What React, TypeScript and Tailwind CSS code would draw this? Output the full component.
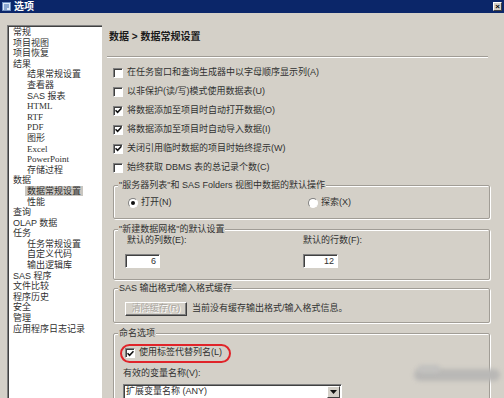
import React from 'react';

const tree: [string, number, boolean?][] = [
  ['常规', 0],
  ['项目视图', 0],
  ['项目恢复', 0],
  ['结果', 0],
  ['结果常规设置', 1],
  ['查看器', 1],
  ['SAS 报表', 1],
  ['HTML', 1],
  ['RTF', 1],
  ['PDF', 1],
  ['图形', 1],
  ['Excel', 1],
  ['PowerPoint', 1],
  ['存储过程', 1],
  ['数据', 0],
  ['数据常规设置', 1, true],
  ['性能', 1],
  ['查询', 0],
  ['OLAP 数据', 0],
  ['任务', 0],
  ['任务常规设置', 1],
  ['自定义代码', 1],
  ['输出逻辑库', 1],
  ['SAS 程序', 0],
  ['文件比较', 0],
  ['程序历史', 0],
  ['安全', 0],
  ['管理', 0],
  ['应用程序日志记录', 0],
];

const options: [string, boolean][] = [
  ['在任务窗口和查询生成器中以字母顺序显示列(A)', false],
  ['以非保护(读/写)模式使用数据表(U)', false],
  ['将数据添加至项目时自动打开数据(O)', true],
  ['将数据添加至项目时自动导入数据(I)', true],
  ['关闭引用临时数据的项目时始终提示(W)', true],
  ['始终获取 DBMS 表的总记录个数(C)', false],
];

function Checkbox({ checked }: { checked: boolean }) {
  return (
    <span className="flex h-[10px] w-[10px] shrink-0 items-center justify-center border border-t-[#808080] border-l-[#808080] border-r-white border-b-white bg-white shadow-[inset_1px_1px_0_#404040]">
      {checked && (
        <svg width="7" height="7" viewBox="0 0 7 7">
          <path d="M0.5 3.2 L2.6 5.3 L6.5 1.2" fill="none" stroke="#111" strokeWidth="1.6" />
        </svg>
      )}
    </span>
  );
}

function Radio({ checked }: { checked: boolean }) {
  return (
    <span className="flex h-[10px] w-[10px] shrink-0 items-center justify-center rounded-full border border-t-[#808080] border-l-[#808080] border-r-white border-b-white bg-white">
      {checked && <span className="h-[4px] w-[4px] rounded-full bg-[#111]" />}
    </span>
  );
}

function Group({ title, className, children }: { title: string; className?: string; children: React.ReactNode }) {
  return (
    <fieldset className={`ml-[6px] rounded-[2px] border border-[#a19d96] shadow-[inset_1px_1px_0_#fff,1px_1px_0_#fff] ${className ?? ''}`}>
      <legend className="ml-[4px] bg-[#d4d0c8] px-[1px] leading-[12px]">{title}</legend>
      {children}
    </fieldset>
  );
}

export default function App() {
  return (
    <div className="relative h-[398px] w-[504px] overflow-hidden bg-[#d4d0c8] font-['Liberation_Sans','Noto_Sans_CJK_SC',sans-serif] text-[9px] text-[#303030]">
      {/* Title bar */}
      <div className="flex h-[13px] items-center bg-[#0b2669] pl-[2px] pr-[2px]">
        <svg width="9" height="9" viewBox="0 0 9 9">
          <rect x="0.5" y="0.5" width="8" height="8" fill="#dce8f6" stroke="#6f8fc0" />
          <path d="M2 3h5M2 5h5M2 7h3" stroke="#3a66a8" strokeWidth="1" />
        </svg>
        <span className="ml-[3px] text-[10px] font-bold leading-[13px] text-white">选项</span>
        <span className="ml-auto flex h-[9px] w-[9px] items-center justify-center border border-t-white border-l-white border-r-[#404040] border-b-[#404040] bg-[#d4d0c8] text-[8px] font-bold leading-none text-black">
          ×
        </span>
      </div>

      <div className="flex h-[385px] pl-[7px] pt-[12px]">
        {/* Tree */}
        <div className="w-[95px] shrink-0 border-l border-t border-[#808080] bg-white pl-[5px] pt-[1px] shadow-[inset_1px_1px_0_#404040]">
          {tree.map(([label, level, selected]) => (
            <div key={label} className="h-[10.6px] whitespace-nowrap leading-[10.6px]">
              <span
                className={`${level ? 'ml-[12px] px-[2px]' : ''} ${selected ? 'bg-[#c9c6c0]' : ''} ${
                  ['HTML', 'RTF', 'PDF', 'Excel', 'PowerPoint'].includes(label) ? "font-['Liberation_Serif',serif]" : ''
                }`}
              >
                {label}
              </span>
            </div>
          ))}
        </div>

        {/* Settings page */}
        <div className="ml-[5px] flex w-[383px] flex-col">
          <div className="mt-[6px] pl-[2px] text-[10px] font-bold leading-[12px] text-[#1a1a1a]">数据 &gt; 数据常规设置</div>
          <div className="mt-[13px] h-[2px] w-[381px] border-t border-b border-t-[#a09c95] border-b-white" />

          <div className="mt-[5px] pl-[6px]">
            {options.map(([label, checked]) => (
              <div key={label} className="flex h-[19px] items-center gap-[4px]">
                <Checkbox checked={checked} />
                <span>{label}</span>
              </div>
            ))}
          </div>

          <Group title={'"服务器列表"和 SAS Folders 视图中数据的默认操作'} className="mt-[2px] pb-[8px]">
            <div className="mt-[5px] flex h-[14px] items-center pl-[14px]">
              <div className="flex w-[180px] items-center gap-[3px]">
                <Radio checked />
                <span>打开(N)</span>
              </div>
              <div className="flex items-center gap-[3px]">
                <Radio checked={false} />
                <span>探索(X)</span>
              </div>
            </div>
          </Group>

          <Group title={'"新建数据网格"的默认设置'} className="mt-[4px] pb-[11px]">
            <div className="flex pl-[11px]">
              <div className="w-[178px]">
                <div className="pl-[2px] leading-[10px]">默认的列数(E):</div>
                <div className="mt-[9px] h-[14px] w-[35px] border border-t-[#808080] border-l-[#808080] border-r-white border-b-white bg-white pr-[3px] text-right leading-[12px] shadow-[inset_1px_1px_0_#404040]">
                  6
                </div>
              </div>
              <div>
                <div className="leading-[10px]">默认的行数(F):</div>
                <div className="mt-[9px] h-[14px] w-[35px] border border-t-[#808080] border-l-[#808080] border-r-white border-b-white bg-white pr-[3px] text-right leading-[12px] shadow-[inset_1px_1px_0_#404040]">
                  12
                </div>
              </div>
            </div>
          </Group>

          <Group title="SAS 输出格式/输入格式缓存" className="mt-[2px] pb-[6px]">
            <div className="mt-[8px] flex items-center pl-[11px]">
              <div className="flex h-[14px] w-[62px] items-center justify-center border border-t-white border-l-white border-r-[#404040] border-b-[#404040] text-[#aaa69f] shadow-[inset_-1px_-1px_0_#808080] [text-shadow:1px_1px_0_#fff]">
                清除缓存(R)
              </div>
              <span className="ml-[5px]">当前没有缓存输出格式/输入格式信息。</span>
            </div>
          </Group>

          <Group title="命名选项" className="mt-[4px] pb-[10px]">
            <div className="relative mt-[7px] flex h-[14px] items-center gap-[4px] pl-[11px]">
              <Checkbox checked />
              <span>使用标签代替列名(L)</span>
              <span className="absolute left-[6px] top-[-2px] h-[19px] w-[111px] rounded-[10px] border-2 border-[#e0242a]" />
            </div>
            <div className="mt-[8px] pl-[9px] leading-[10px]">有效的变量名称(V):</div>
            <div className="ml-[9px] mt-[6px] flex h-[16px] w-[219px] items-center border border-t-[#808080] border-l-[#808080] border-r-white border-b-white bg-white pl-[2px] shadow-[inset_1px_1px_0_#404040]">
              <span className="flex-1">扩展变量名称 (ANY)</span>
              <span className="mr-[1px] flex h-[12px] w-[13px] items-center justify-center border border-t-white border-l-white border-r-[#404040] border-b-[#404040] bg-[#d4d0c8]">
                <svg width="7" height="4" viewBox="0 0 7 4">
                  <path d="M0 0h7L3.5 4z" fill="#111" />
                </svg>
              </span>
            </div>
          </Group>
        </div>
      </div>

      {/* faint watermark */}
      <div className="absolute left-[414px] top-[369px] h-[12px] w-[86px] rounded-[6px] bg-[#b9b8b6] blur-[2px]" />
      <div className="absolute left-[418px] top-[365px] h-[8px] w-[22px] rounded-full bg-[#c2c1bf] blur-[2px]" />
    </div>
  );
}
